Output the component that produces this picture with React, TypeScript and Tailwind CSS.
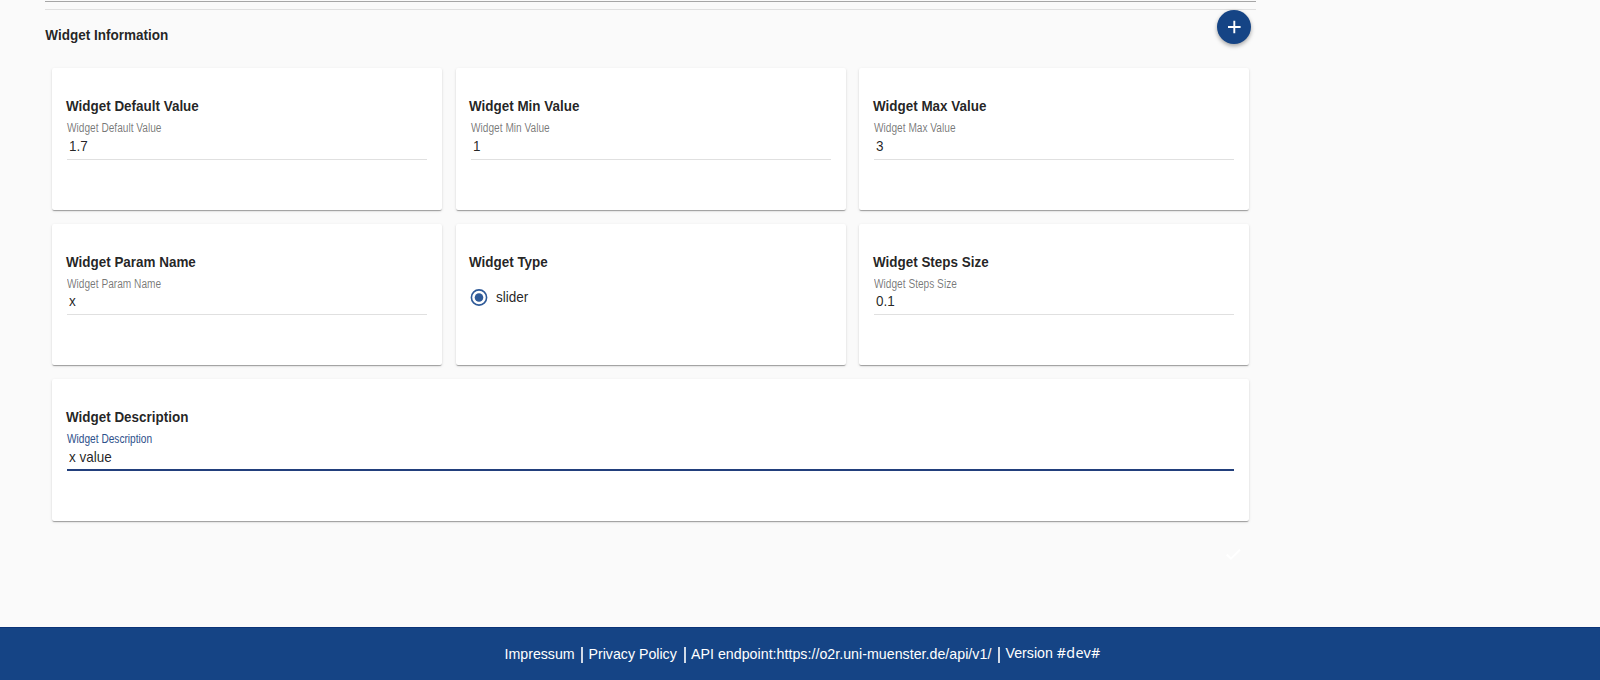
import React from "react";

function Card({ title, wide = false, children }: { title: string; wide?: boolean; children: React.ReactNode }) {
  return (
    <section
      className={
        (wide ? "col-span-3 " : "") +
        "rounded-[2px] bg-white px-[13.6px] pt-[31px] shadow-[0_2px_1px_-1px_rgba(0,0,0,0.2),0_1px_1px_0_rgba(0,0,0,0.14),0_1px_3px_0_rgba(0,0,0,0.12)]"
      }
    >
      <h2 className="h-[15px] origin-left -translate-y-[0.8px] scale-x-[0.896] text-[15px] leading-[15px] font-bold whitespace-nowrap">{title}</h2>
      {children}
    </section>
  );
}

function Field({ label, value, active = false, tight = false }: { label: string; value: string; active?: boolean; tight?: boolean }) {
  return (
    <div className={"mr-[1.4px] ml-[1.4px] " + (tight ? "mt-[8px]" : "mt-[9px]")}>
      <label
        className={
          "block h-[12px] origin-left scale-x-[0.845] text-[12px] leading-[12px] whitespace-nowrap " +
          (tight ? "" : "-translate-y-[0.6px] ") +
          (active ? "text-[#2d508b]" : "text-black/54")
        }
      >
        {label}
      </label>
      <div
        className={
          "h-[25px] pt-[4px] pl-[2px] text-[15px] leading-[16px] " +
          (active ? "border-b-2 border-[#223f7c]" : "border-b border-black/12")
        }
      >
        <span className="inline-block origin-left -translate-y-[0.8px] scale-x-[0.9]">{value}</span>
      </div>
    </div>
  );
}

export default function App() {
  return (
    <div className="flex h-[680px] w-[1600px] flex-col overflow-hidden bg-[#fafafa] font-['Liberation_Sans',Arial,sans-serif] text-black/87">
      <main className="ml-[45.4px] h-[627px] w-[1211px]">
        <div className="mt-[1px] h-px bg-[#a6a6a6]" />
        <div className="mt-[7px] h-px bg-[#e0e0e0]" />
        <header className="flex h-[58px] justify-between">
          <h1 className="mt-[18px] h-[15px] origin-left translate-x-[0.3px] -translate-y-[0.6px] scale-x-[0.9] text-[15px] leading-[15px] font-bold">Widget Information</h1>
          <button className="mr-[5px] flex size-[34px] items-center justify-center rounded-full bg-[#154485] shadow-[0_2px_4px_rgba(0,0,0,0.35)]">
            <svg width="14" height="14" viewBox="0 0 14 14" fill="none" stroke="white" strokeWidth="1.9">
              <path d="M7.3 .7v12.6M1 7h12.6" />
            </svg>
          </button>
        </header>
        <div className="mr-[7px] ml-[6.6px] grid grid-cols-3 grid-rows-[142px_141px_142px] gap-x-[13.4px] gap-y-[14px]">
          <Card title="Widget Default Value"><Field label="Widget Default Value" value="1.7" /></Card>
          <Card title="Widget Min Value"><Field label="Widget Min Value" value="1" /></Card>
          <Card title="Widget Max Value"><Field label="Widget Max Value" value="3" /></Card>
          <Card title="Widget Param Name"><Field label="Widget Param Name" value="x" tight /></Card>
          <Card title="Widget Type">
            <div className="mt-[19px] ml-[1.2px] flex items-center gap-[8.5px] text-[15px] leading-[17px]">
              <svg width="18" height="17" viewBox="0 0 18 17">
                <circle cx="9" cy="8.5" r="7.6" fill="none" stroke="#2f5a98" strokeWidth="1.6" />
                <circle cx="9" cy="8.5" r="4.3" fill="#2f5a98" />
              </svg>
              <span className="-ml-[1px] origin-left -translate-y-[0.6px] scale-x-[0.9]">slider</span>
            </div>
          </Card>
          <Card title="Widget Steps Size"><Field label="Widget Steps Size" value="0.1" tight /></Card>
          <Card title="Widget Description" wide><Field label="Widget Description" value="x value" active /></Card>
        </div>
        <div className="mt-[28px] mr-[15px] flex justify-end">
          <svg width="15" height="12" viewBox="0 0 15 12" fill="none" stroke="white" strokeWidth="2">
            <path d="M.7 5.5L4.9 9.7L14 .8" />
          </svg>
        </div>
      </main>
      <footer className="flex h-[53px] border-t border-[#0b3478] bg-[#154485] pl-[504.5px] text-[14.2px] leading-[16px] text-white">
        <div className="mt-[18px] flex h-[16px]">
          <span className="w-[70px]">Impressum</span>
          <span className="mt-px ml-[6px] h-[16px] w-[2px] bg-white/80" />
          <span className="ml-[6px] w-[89px] whitespace-nowrap">Privacy Policy</span>
          <span className="mt-px ml-[6px] h-[16px] w-[2px] bg-white/80" />
          <span className="ml-[5.5px] w-[301px] tracking-[0.03px] whitespace-nowrap">API endpoint:https://o2r.uni-muenster.de/api/v1/</span>
          <span className="mt-px ml-[5.5px] h-[16px] w-[2px] bg-white/80" />
          <span className="-mt-px ml-[6px] whitespace-nowrap">Version <span className="font-['Noto_Sans',sans-serif] text-[14.3px] tracking-[0.3px]">#dev#</span></span>
        </div>
      </footer>
    </div>
  );
}
